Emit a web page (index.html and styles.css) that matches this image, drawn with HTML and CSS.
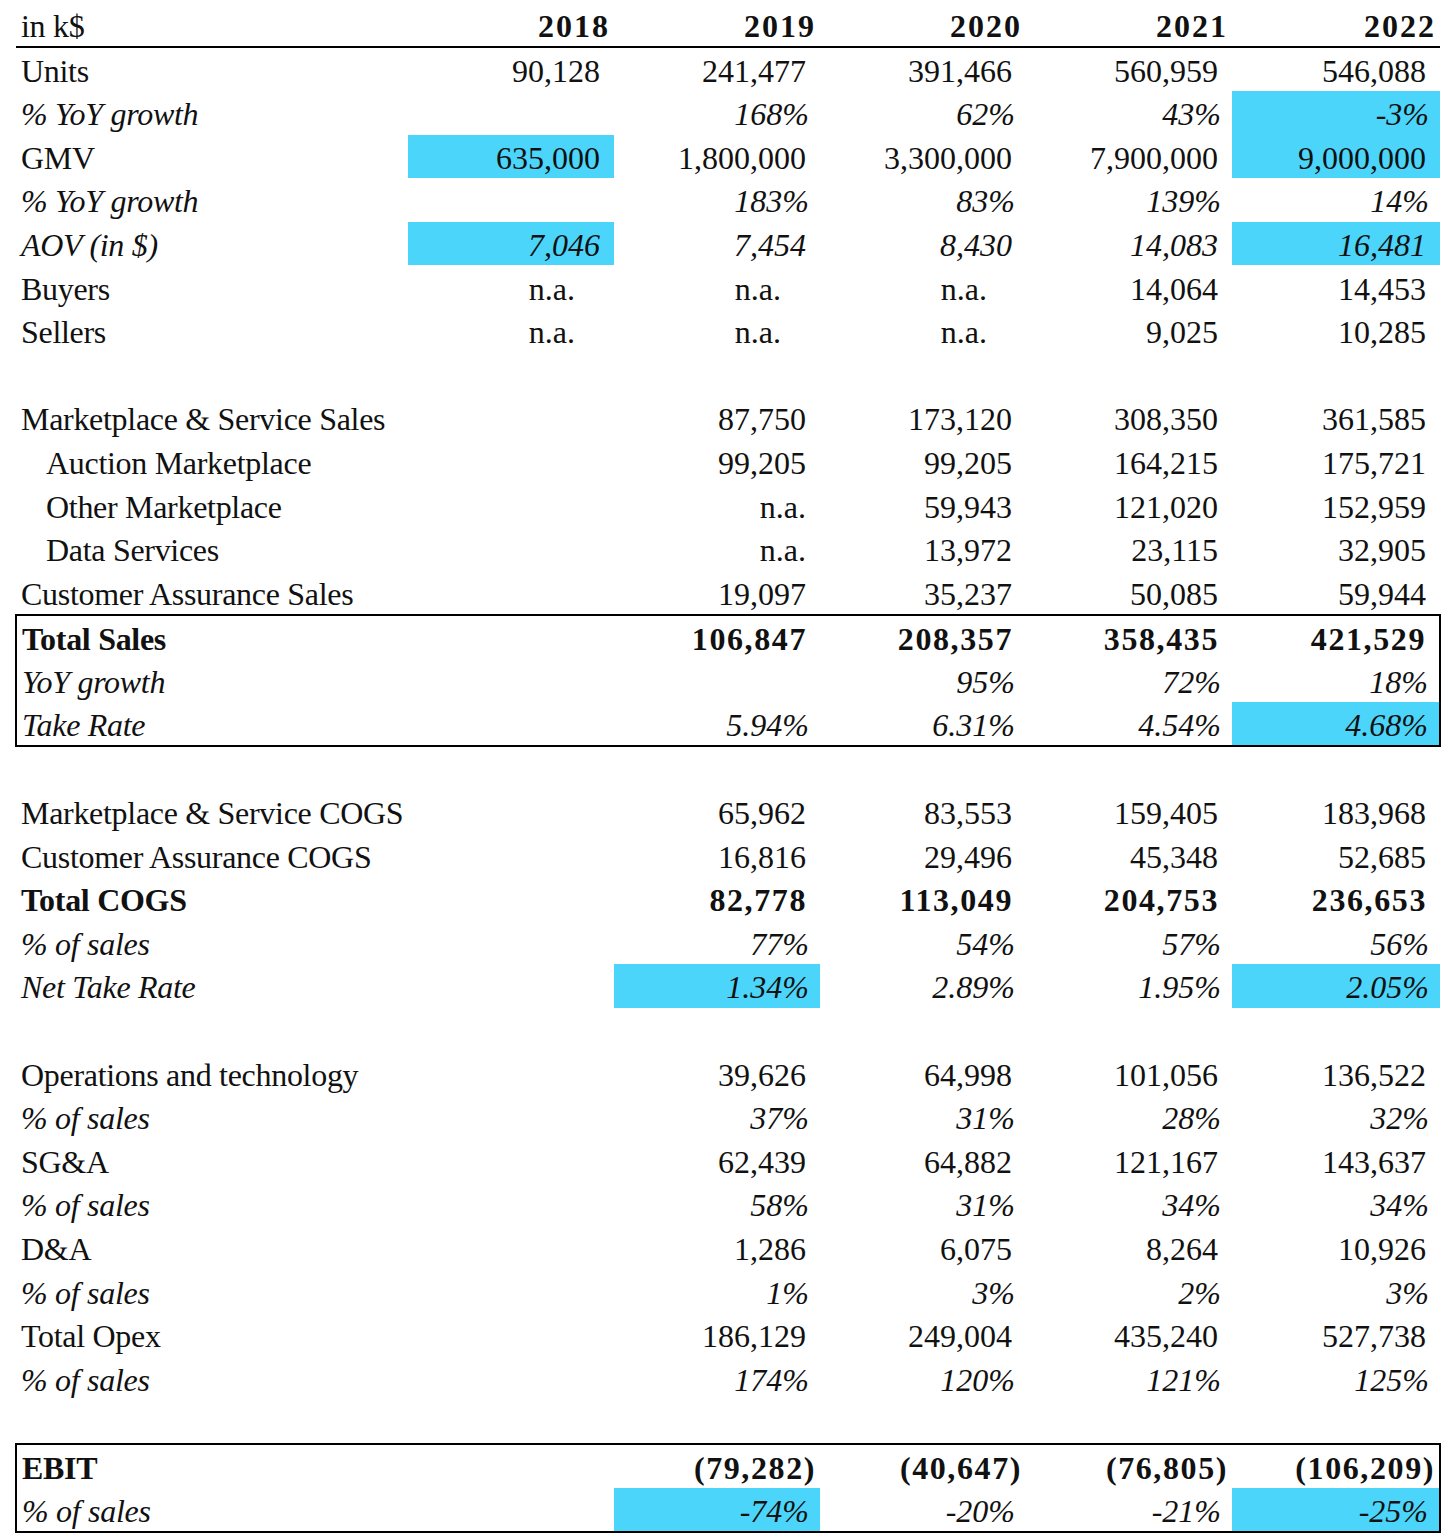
FILE: index.html
```html
<!DOCTYPE html>
<html>
<head>
<meta charset="utf-8">
<link rel="stylesheet" href="styles.css">
</head>
<body>
<div class="sheet">
<table class="fin">
<colgroup><col class="c-label"><col class="c-yr"><col class="c-yr"><col class="c-yr"><col class="c-yr"><col class="c-last"></colgroup>
<thead>
<tr class="head"><th class="lbl">in k$</th><th>2018</th><th>2019</th><th>2020</th><th>2021</th><th>2022</th></tr>
</thead>
<tbody>
<tr><td class="lbl">Units</td><td class="n">90,128</td><td class="n">241,477</td><td class="n">391,466</td><td class="n">560,959</td><td class="n">546,088</td></tr>
<tr class="it"><td class="lbl">% YoY growth</td><td class="p"></td><td class="p">168%</td><td class="p">62%</td><td class="p">43%</td><td class="p hl">-3%</td></tr>
<tr><td class="lbl">GMV</td><td class="n hl">635,000</td><td class="n">1,800,000</td><td class="n">3,300,000</td><td class="n">7,900,000</td><td class="n hl">9,000,000</td></tr>
<tr class="it"><td class="lbl">% YoY growth</td><td class="p"></td><td class="p">183%</td><td class="p">83%</td><td class="p">139%</td><td class="p">14%</td></tr>
<tr class="it"><td class="lbl">AOV (in $)</td><td class="n hl">7,046</td><td class="n">7,454</td><td class="n">8,430</td><td class="n">14,083</td><td class="n hl">16,481</td></tr>
<tr><td class="lbl">Buyers</td><td class="na">n.a.</td><td class="na">n.a.</td><td class="na">n.a.</td><td class="n">14,064</td><td class="n">14,453</td></tr>
<tr><td class="lbl">Sellers</td><td class="na">n.a.</td><td class="na">n.a.</td><td class="na">n.a.</td><td class="n">9,025</td><td class="n">10,285</td></tr>
<tr class="blank"><td colspan="6"></td></tr>
<tr><td class="lbl">Marketplace &amp; Service Sales</td><td class="n"></td><td class="n">87,750</td><td class="n">173,120</td><td class="n">308,350</td><td class="n">361,585</td></tr>
<tr><td class="lbl ind">Auction Marketplace</td><td class="n"></td><td class="n">99,205</td><td class="n">99,205</td><td class="n">164,215</td><td class="n">175,721</td></tr>
<tr><td class="lbl ind">Other Marketplace</td><td class="n"></td><td class="n">n.a.</td><td class="n">59,943</td><td class="n">121,020</td><td class="n">152,959</td></tr>
<tr><td class="lbl ind">Data Services</td><td class="n"></td><td class="n">n.a.</td><td class="n">13,972</td><td class="n">23,115</td><td class="n">32,905</td></tr>
<tr><td class="lbl">Customer Assurance Sales</td><td class="n"></td><td class="n">19,097</td><td class="n">35,237</td><td class="n">50,085</td><td class="n">59,944</td></tr>
</tbody>
<tbody class="box">
<tr class="bold"><td class="lbl">Total Sales</td><td class="n"></td><td class="n">106,847</td><td class="n">208,357</td><td class="n">358,435</td><td class="n">421,529</td></tr>
<tr class="it"><td class="lbl">YoY growth</td><td class="p"></td><td class="p"></td><td class="p">95%</td><td class="p">72%</td><td class="p">18%</td></tr>
<tr class="it"><td class="lbl">Take Rate</td><td class="p"></td><td class="p">5.94%</td><td class="p">6.31%</td><td class="p">4.54%</td><td class="p hl">4.68%</td></tr>
</tbody>
<tbody>
<tr class="blank"><td colspan="6"></td></tr>
<tr><td class="lbl">Marketplace &amp; Service COGS</td><td class="n"></td><td class="n">65,962</td><td class="n">83,553</td><td class="n">159,405</td><td class="n">183,968</td></tr>
<tr><td class="lbl">Customer Assurance COGS</td><td class="n"></td><td class="n">16,816</td><td class="n">29,496</td><td class="n">45,348</td><td class="n">52,685</td></tr>
<tr class="bold"><td class="lbl">Total COGS</td><td class="n"></td><td class="n">82,778</td><td class="n">113,049</td><td class="n">204,753</td><td class="n">236,653</td></tr>
<tr class="it"><td class="lbl">% of sales</td><td class="p"></td><td class="p">77%</td><td class="p">54%</td><td class="p">57%</td><td class="p">56%</td></tr>
<tr class="it"><td class="lbl">Net Take Rate</td><td class="p"></td><td class="p hl">1.34%</td><td class="p">2.89%</td><td class="p">1.95%</td><td class="p hl">2.05%</td></tr>
<tr class="blank"><td colspan="6"></td></tr>
<tr><td class="lbl">Operations and technology</td><td class="n"></td><td class="n">39,626</td><td class="n">64,998</td><td class="n">101,056</td><td class="n">136,522</td></tr>
<tr class="it"><td class="lbl">% of sales</td><td class="p"></td><td class="p">37%</td><td class="p">31%</td><td class="p">28%</td><td class="p">32%</td></tr>
<tr><td class="lbl">SG&amp;A</td><td class="n"></td><td class="n">62,439</td><td class="n">64,882</td><td class="n">121,167</td><td class="n">143,637</td></tr>
<tr class="it"><td class="lbl">% of sales</td><td class="p"></td><td class="p">58%</td><td class="p">31%</td><td class="p">34%</td><td class="p">34%</td></tr>
<tr><td class="lbl">D&amp;A</td><td class="n"></td><td class="n">1,286</td><td class="n">6,075</td><td class="n">8,264</td><td class="n">10,926</td></tr>
<tr class="it"><td class="lbl">% of sales</td><td class="p"></td><td class="p">1%</td><td class="p">3%</td><td class="p">2%</td><td class="p">3%</td></tr>
<tr><td class="lbl">Total Opex</td><td class="n"></td><td class="n">186,129</td><td class="n">249,004</td><td class="n">435,240</td><td class="n">527,738</td></tr>
<tr class="it"><td class="lbl">% of sales</td><td class="p"></td><td class="p">174%</td><td class="p">120%</td><td class="p">121%</td><td class="p">125%</td></tr>
<tr class="blank"><td colspan="6"></td></tr>
</tbody>
<tbody class="box">
<tr class="bold"><td class="lbl">EBIT</td><td class="neg"></td><td class="neg">(79,282)</td><td class="neg">(40,647)</td><td class="neg">(76,805)</td><td class="neg">(106,209)</td></tr>
<tr class="it"><td class="lbl">% of sales</td><td class="p"></td><td class="p hl">-74%</td><td class="p">-20%</td><td class="p">-21%</td><td class="p hl">-25%</td></tr>
</tbody>
</table>
</div>
</body>
</html>
```

FILE: styles.css
```css
html, body {
  margin: 0;
  padding: 0;
  background: #ffffff;
}

.sheet {
  padding: 3px 17px 0 15px;
}

.fin {
  width: 1424px;
  table-layout: fixed;
  border-collapse: collapse;
  font-family: "Liberation Serif", "Times New Roman", serif;
  font-size: 32px;
  color: #111111;
}

.c-label { width: 392px; }
.c-yr { width: 206px; }
.c-last { width: 208px; }

.fin th,
.fin td {
  height: 43.6px;
  padding: 3px 0 0 0;
  line-height: 40px;
  white-space: nowrap;
  text-align: right;
  vertical-align: middle;
  box-sizing: border-box;
}

.fin thead th {
  font-weight: 700;
  padding-right: 4px;
  letter-spacing: 2px;
  border-bottom: 2px solid #000;
}

.fin thead th.lbl {
  font-weight: 400;
  letter-spacing: -0.3px;
}

.fin .lbl {
  text-align: left;
  padding-left: 5px;
  letter-spacing: -0.3px;
}

.fin .lbl.ind {
  padding-left: 30px;
}

.fin td.n { padding-right: 14px; }
.fin td.p { padding-right: 11px; }
.fin td.neg { padding-right: 4px; }
.fin td.na { padding-right: 39px; }

.it td { font-style: italic; }
.bold td { font-weight: 700; }

.bold td.n,
.bold td.neg {
  letter-spacing: 1.6px;
}

.bold td.n { padding-right: 13px; }

.fin td.hl {
  background: #4cd5fa;
}

.box {
  border: 2px solid #000;
}
```
